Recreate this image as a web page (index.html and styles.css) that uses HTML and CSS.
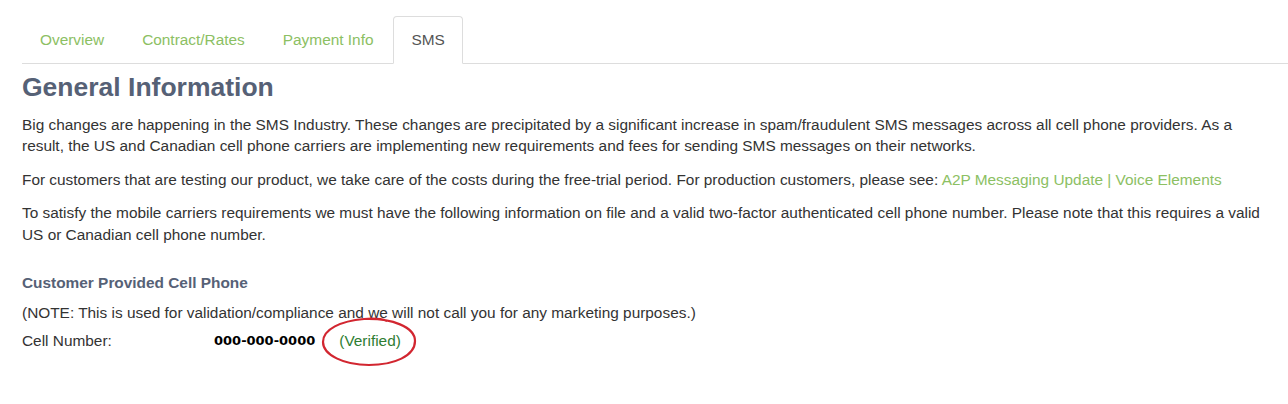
FILE: index.html
```html
<!DOCTYPE html>
<html lang="en">
<head>
  <meta charset="UTF-8">
  <title>SMS Settings</title>
  <link rel="stylesheet" href="styles.css">
</head>
<body>
  <div class="page">
    <ul class="nav-tabs">
      <li><a href="#">Overview</a></li>
      <li><a href="#">Contract/Rates</a></li>
      <li><a href="#">Payment Info</a></li>
      <li class="active"><a href="#">SMS</a></li>
    </ul>

    <div class="tab-content">
      <h2 class="section-title">General Information</h2>
      <p>Big changes are happening in the SMS Industry. These changes are precipitated by a significant increase in spam/fraudulent SMS messages across all cell phone providers. As a result, the US and Canadian cell phone carriers are implementing new requirements and fees for sending SMS messages on their networks.</p>
      <p>For customers that are testing our product, we take care of the costs during the free-trial period. For production customers, please see: <a class="link" href="#">A2P Messaging Update | Voice Elements</a></p>
      <p>To satisfy the mobile carriers requirements we must have the following information on file and a valid two-factor authenticated cell phone number. Please note that this requires a valid US or Canadian cell phone number.</p>

      <h4 class="sub-title">Customer Provided Cell Phone</h4>
      <p class="note">(NOTE: This is used for validation/compliance and we will not call you for any marketing purposes.)</p>
      <div class="cell-row">
        <span class="cell-label">Cell Number:</span>
        <span class="cell-value">000-000-0000</span>
        <span class="verified">(Verified)
          <svg class="circle" width="96" height="50" viewBox="0 0 96 50">
            <path d="M42 2 C70 1 93 10 93 24 C93 39 72 48 47 48 C22 48 1 38 1 25 C1 12 19 4 42 2 C54 1 60 2 65 4" fill="none" stroke="#d22630" stroke-width="2.2"/>
          </svg>
        </span>
      </div>
    </div>
  </div>
</body>
</html>
```

FILE: styles.css
```css
html, body {
  min-height: 404px;
}
body {
  margin: 0;
  font-family: "Liberation Sans", Arial, sans-serif;
  font-size: 15.4px;
  line-height: 21.5px;
  color: #333;
  background: #fff;
}
.page {
  padding: 16px 0 60px 22px;
}
.nav-tabs {
  list-style: none;
  margin: 0;
  padding: 0;
  display: flex;
  border-bottom: 1px solid #ddd;
}
.nav-tabs li {
  margin-right: 2px;
  margin-bottom: -1px;
}
.nav-tabs a {
  display: block;
  padding: 12px 17px;
  color: #8cc063;
  text-decoration: none;
  border: 1px solid transparent;
  border-radius: 4px 4px 0 0;
}
.nav-tabs .active a {
  color: #555;
  background: #fff;
  border-color: #ddd #ddd transparent;
}
.tab-content {
  padding-right: 16px;
}
.section-title {
  margin: 6px 0 10px;
  font-size: 26.5px;
  line-height: 34px;
  font-weight: bold;
  color: #566176;
}
p {
  margin: 0 0 12px;
}
.link {
  color: #8cc063;
  text-decoration: none;
}
.sub-title {
  margin: 27px 0 8px;
  font-size: 15.4px;
  font-weight: bold;
  color: #566176;
}
.note {
  margin-bottom: 7px;
}
.cell-row {
  display: flex;
  align-items: center;
}
.cell-label {
  width: 192px;
}
.cell-value {
  font-family: "DejaVu Sans", Verdana, sans-serif;
  font-size: 13px;
  font-weight: bold;
  color: #000;
}
.verified {
  position: relative;
  margin-left: 24px;
  color: #2e7d32;
}
.circle {
  position: absolute;
  left: -17px;
  top: -13px;
  overflow: visible;
}
```
